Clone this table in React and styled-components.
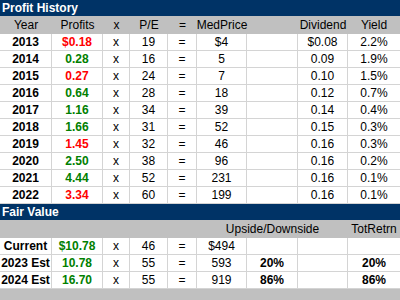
import React from 'react';
import styled, { createGlobalStyle } from 'styled-components';

const GlobalStyle = createGlobalStyle`
  html, body {
    margin: 0;
    padding: 0;
    background: #ffffff;
  }
  body {
    font-family: "Liberation Sans", Arial, sans-serif;
    font-size: 12px;
    color: #000000;
  }
`;

const COLUMNS = '52px 51px 27px 38px 29px 50px 51px 50px 52px';

const Sheet = styled.div`
  width: 400px;
  height: 300px;
  display: flex;
  flex-direction: column;
  overflow: hidden;
  background: #ffffff;
`;

const SectionTitle = styled.div`
  height: 16px;
  line-height: 16px;
  padding-left: 2px;
  background: #003366;
  color: #ffffff;
  font-weight: 700;
  white-space: nowrap;
`;

const HeaderRow = styled.div`
  display: grid;
  grid-template-columns: ${COLUMNS};
  height: 18px;
  background: #c0c0c0;
`;

const HeaderCell = styled.div`
  grid-column: ${({ $col }) => $col || 'auto'};
  display: flex;
  align-items: center;
  justify-content: center;
  white-space: nowrap;
`;

const Row = styled.div`
  display: grid;
  grid-template-columns: ${COLUMNS};
  height: 17px;
  box-sizing: border-box;
  border-bottom: 1px solid #d4d4d4;
`;

const toneColor = {
  red: '#ff0000',
  green: '#008000',
};

const Cell = styled.div`
  display: flex;
  align-items: center;
  justify-content: center;
  white-space: nowrap;
  border-right: 1px solid #d4d4d4;
  font-weight: ${({ $bold }) => ($bold ? 700 : 400)};
  color: ${({ $tone }) => toneColor[$tone] || '#000000'};

  &:last-child {
    border-right: none;
  }
`;

const Filler = styled.div`
  flex: 1;
  background: #c0c0c0;
`;

const history = [
  ['2013', '$0.18', 'red', '19', '$4', '$0.08', '2.2%'],
  ['2014', '0.28', 'green', '16', '5', '0.09', '1.9%'],
  ['2015', '0.27', 'red', '24', '7', '0.10', '1.5%'],
  ['2016', '0.64', 'green', '28', '18', '0.12', '0.7%'],
  ['2017', '1.16', 'green', '34', '39', '0.14', '0.4%'],
  ['2018', '1.66', 'green', '31', '52', '0.15', '0.3%'],
  ['2019', '1.45', 'red', '32', '46', '0.16', '0.3%'],
  ['2020', '2.50', 'green', '38', '96', '0.16', '0.2%'],
  ['2021', '4.44', 'green', '52', '231', '0.16', '0.1%'],
  ['2022', '3.34', 'red', '60', '199', '0.16', '0.1%'],
];

const fairValue = [
  ['Current', '$10.78', '46', '$494', '', ''],
  ['2023 Est', '10.78', '55', '593', '20%', '20%'],
  ['2024 Est', '16.70', '55', '919', '86%', '86%'],
];

const App = () => (
  <>
    <GlobalStyle />
    <Sheet>
      <SectionTitle>Profit History</SectionTitle>
      <HeaderRow>
        <HeaderCell>Year</HeaderCell>
        <HeaderCell>Profits</HeaderCell>
        <HeaderCell>x</HeaderCell>
        <HeaderCell>P/E</HeaderCell>
        <HeaderCell>=</HeaderCell>
        <HeaderCell>MedPrice</HeaderCell>
        <HeaderCell />
        <HeaderCell>Dividend</HeaderCell>
        <HeaderCell>Yield</HeaderCell>
      </HeaderRow>
      {history.map(([year, profit, tone, pe, price, div, yld]) => (
        <Row key={year}>
          <Cell $bold>{year}</Cell>
          <Cell $bold $tone={tone}>{profit}</Cell>
          <Cell>x</Cell>
          <Cell>{pe}</Cell>
          <Cell>=</Cell>
          <Cell>{price}</Cell>
          <Cell />
          <Cell>{div}</Cell>
          <Cell>{yld}</Cell>
        </Row>
      ))}

      <SectionTitle>Fair Value</SectionTitle>
      <HeaderRow>
        <HeaderCell $col="6 / span 3">Upside/Downside</HeaderCell>
        <HeaderCell $col="9">TotRetrn</HeaderCell>
      </HeaderRow>
      {fairValue.map(([label, profit, pe, price, upside, total]) => (
        <Row key={label}>
          <Cell $bold>{label}</Cell>
          <Cell $bold $tone="green">{profit}</Cell>
          <Cell>x</Cell>
          <Cell>{pe}</Cell>
          <Cell>=</Cell>
          <Cell>{price}</Cell>
          <Cell $bold>{upside}</Cell>
          <Cell />
          <Cell $bold>{total}</Cell>
        </Row>
      ))}
      <Filler />
    </Sheet>
  </>
);

export default App;
